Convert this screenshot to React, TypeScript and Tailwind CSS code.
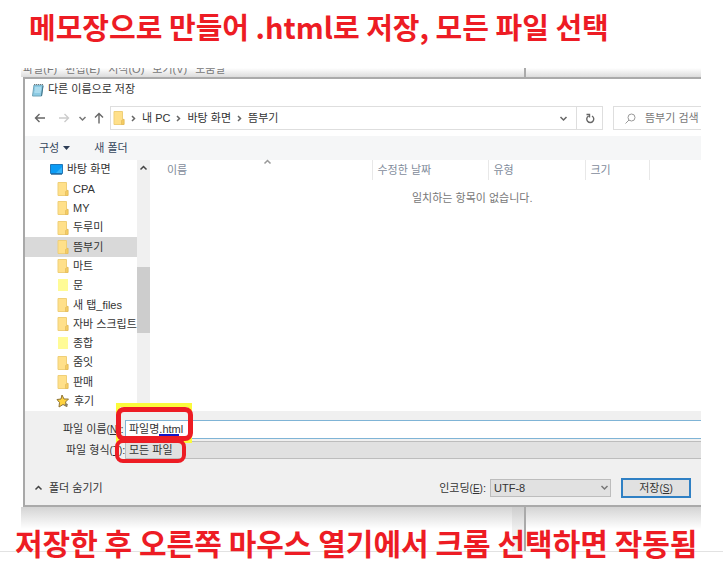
import type { ReactNode } from "react";

const MENU = ["파일(F)", "편집(E)", "서식(O)", "보기(V)", "도움말"];

type Kind = "desktop" | "folder" | "note" | "star";

const TREE: { name: string; kind: Kind; selected?: boolean }[] = [
  { name: "바탕 화면", kind: "desktop" },
  { name: "CPA", kind: "folder" },
  { name: "MY", kind: "folder" },
  { name: "두루미", kind: "folder" },
  { name: "뜸부기", kind: "folder", selected: true },
  { name: "마트", kind: "folder" },
  { name: "문", kind: "note" },
  { name: "새 탭_files", kind: "folder" },
  { name: "자바 스크립트", kind: "folder" },
  { name: "종합", kind: "note" },
  { name: "줌잇", kind: "folder" },
  { name: "판매", kind: "folder" },
  { name: "후기", kind: "star" },
];

function FolderIcon() {
  return (
    <svg width="12" height="14" viewBox="0 0 12 14" className="shrink-0">
      <path d="M1 .5h8.500v8H11v5H1z" fill="#ffe08a" stroke="#efcf78" />
      <path d="M8.500 13.500V9.500L11 8v5.500z" fill="#f5cd62" stroke="#dfb65a" strokeWidth=".6" />
    </svg>
  );
}

function TreeIcon({ kind }: { kind: Kind }) {
  if (kind === "folder") return <FolderIcon />;
  if (kind === "note")
    return (
      <svg width="12" height="14" viewBox="0 0 12 14" className="shrink-0">
        <path d="M1 1h10v12H1z" fill="#fffb96" />
      </svg>
    );
  if (kind === "desktop")
    return (
      <svg width="13" height="11" viewBox="0 0 13 11" className="shrink-0">
        <path d="M.5.5h12v9H.5z" fill="#0c9cf5" stroke="#2178b8" />
        <path d="M6 9l6-6v6z" fill="#35b3fa" />
        <path d="M1 10.200h11" stroke="#175d92" />
      </svg>
    );
  return (
    <svg width="14" height="14" viewBox="0 0 14 14" className="shrink-0">
      <path d="M6 1l2 4 4.500 0-3 3 1.500 4.500-4-2-4 2.500.5-4.500-2.500-3L5 5z" fill="#ffd23d" stroke="#8e7436" strokeLinejoin="round" />
      <path d="M9 9.500l3 .5-1 2.500-2.500-.5z" fill="#8a8069" />
    </svg>
  );
}

function Chevron({ dir, className = "" }: { dir: "up" | "down" | "right"; className?: string }) {
  const d = { up: "M1.500 5.500L4.500 2.500l3 3", down: "M1.500 3L4.500 6l3-3", right: "M3 2l2.500 2.500L3 7" }[dir];
  return (
    <svg width="9" height="9" viewBox="0 0 9 9" fill="none" stroke="currentColor" strokeWidth="1.500" className={`shrink-0 ${className}`}>
      <path d={d} />
    </svg>
  );
}

function Arrow({ className, d }: { className: string; d: string }) {
  return (
    <svg width="12" height="12" viewBox="0 0 12 12" fill="none" stroke="currentColor" strokeWidth="1.400" className={className}>
      <path d={d} />
    </svg>
  );
}

function Key({ children }: { children: ReactNode }) {
  return (
    <span className="text-[10px]">
      (<u>{children}</u>)
    </span>
  );
}

function AddressRow() {
  return (
    <div className="flex h-9 items-center">
      <div className="flex w-[85px] shrink-0 items-center pl-[9px]">
        <button aria-label="뒤로" className="text-[#666]">
          <Arrow className="block" d="M11 6H1.500M5.500 2l-4 4 4 4" />
        </button>
        <button aria-label="앞으로" className="ml-3 text-[#ccc]">
          <Arrow className="block" d="M1 6h9.500M6.500 2l4 4-4 4" />
        </button>
        <button aria-label="최근 위치" className="ml-2 text-[#777]">
          <Chevron dir="down" className="block" />
        </button>
        <button aria-label="위로" className="ml-1.5 text-[#666]">
          <Arrow className="block" d="M6 11.500V1.500M2 5.500l4-4 4 4" />
        </button>
      </div>
      <nav className="flex h-6 flex-1 items-center border border-[#dedede] pl-0.5">
        <FolderIcon />
        <Chevron dir="right" className="mx-1 text-[#666]" />
        <a href="#pc">내 PC</a>
        <Chevron dir="right" className="mx-1 text-[#666]" />
        <a href="#desktop">바탕 화면</a>
        <Chevron dir="right" className="mx-1 text-[#666]" />
        <a href="#folder">뜸부기</a>
        <button aria-label="이전 위치" className="mr-2 ml-auto text-[#666]">
          <Chevron dir="down" className="block" />
        </button>
        <button aria-label="새로 고침" className="flex h-full w-[26px] items-center justify-center border-l border-[#dedede] text-[#666]">
          <svg width="10" height="11" viewBox="0 0 10 11" fill="none" stroke="currentColor" strokeWidth="1.400">
            <path d="M7 3a3.500 3.500 0 1 1-3.500 0M1.500 1.500h3v3" />
          </svg>
        </button>
      </nav>
      <label className="ml-2.5 flex h-6 w-[88px] shrink-0 items-center border border-r-0 border-[#dedede] pl-[11px]">
        <svg width="11" height="11" viewBox="0 0 11 11" fill="none" stroke="#999" className="shrink-0">
          <circle cx="6.500" cy="4.500" r="3.500" />
          <path d="M4 7L.5 10.500" />
        </svg>
        <input aria-label="검색" placeholder="뜸부기 검색" className="ml-[9px] w-full min-w-0 bg-transparent outline-none placeholder:text-[#777]" />
      </label>
    </div>
  );
}

function Tree() {
  return (
    <ul className="grid w-[112px] shrink-0 grid-rows-13">
      {TREE.map((item) => (
        <li key={item.name} className={`flex ${item.selected ? "bg-[#d9d9d9]" : ""}`}>
          <button
            className={`flex w-full items-center gap-1 whitespace-nowrap ${
              item.kind === "desktop" ? "pl-[25px]" : item.kind === "star" ? "pl-[31px]" : "pl-8"
            }`}
          >
            <TreeIcon kind={item.kind} />
            {item.name}
          </button>
        </li>
      ))}
    </ul>
  );
}

function FileList() {
  return (
    <div className="relative min-w-0 flex-1">
      <Chevron dir="up" className="absolute -top-0.5 left-[113px] text-[#999]" />
      <table className="w-full table-fixed text-left">
        <thead className="text-[#7f8c9b]">
          <tr className="h-5">
            <th className="w-[222px] border-r border-[#e8e8e8] pl-[17px] font-normal">이름</th>
            <th className="w-[116px] border-r border-[#e8e8e8] pl-[5px] font-normal">수정한 날짜</th>
            <th className="w-[97px] border-r border-[#e8e8e8] pl-[5px] font-normal">유형</th>
            <th className="w-16 border-r border-[#e8e8e8] pl-[5px] font-normal">크기</th>
            <th />
          </tr>
        </thead>
        <tbody>
          <tr className="h-9 text-[#777]">
            <td colSpan={5} className="pl-[262px]">
              일치하는 항목이 없습니다.
            </td>
          </tr>
        </tbody>
      </table>
    </div>
  );
}

function SaveForm() {
  return (
    <form className="h-[94px] bg-[#f0f0f0] pt-[9px]">
      <div className="relative flex h-[19px]">
        <label htmlFor="name" className="flex w-[100px] shrink-0 items-center pl-[38px] whitespace-nowrap">
          파일 이름<Key>N</Key>:
        </label>
        <input id="name" defaultValue="파일명.html" className="min-w-0 flex-1 border border-r-0 border-[#7fb4d6] bg-white pl-[3px] outline-none" />
        <span className="absolute top-3.5 left-[134px] h-0.5 w-5 bg-[#1414c8]" />
        <span className="absolute -top-[17px] left-[91px] z-10 h-10 w-[76px] border-4 border-[#fbfb3c]" />
        <span className="absolute -top-[13px] left-[91px] z-20 h-[34px] w-[77px] rounded-lg border-5 border-[#ed1c24]" />
      </div>
      <div className="relative mt-0.5 flex h-[18px]">
        <label htmlFor="type" className="flex w-[100px] shrink-0 items-center pl-[41px] whitespace-nowrap">
          파일 형식<Key>T</Key>:
        </label>
        <select id="type" className="min-w-0 flex-1 appearance-none border border-r-0 border-[#bdbdbd] bg-[#e1e1e1] pl-[3px]">
          <option>모든 파일</option>
        </select>
        <span className="absolute -top-0.5 left-[90px] z-20 h-6 w-[71px] rounded-lg border-4 border-[#ed1c24]" />
      </div>
      <div className="mt-5 flex h-[18px] items-center pr-2.5">
        <button type="button" className="ml-[9px] flex items-center gap-1.5">
          <Chevron dir="up" className="text-[#444]" />
          폴더 숨기기
        </button>
        <label htmlFor="encoding" className="mr-1 ml-auto">
          인코딩<Key>E</Key>:
        </label>
        <div className="relative">
          <select id="encoding" className="block h-[18px] w-[121px] appearance-none border border-[#bdbdbd] bg-[#e1e1e1] pl-[3px]">
            <option>UTF-8</option>
          </select>
          <Chevron dir="down" className="pointer-events-none absolute top-1 right-0.5 text-[#777]" />
        </div>
        <button type="button" className="ml-2.5 h-5 w-[70px] border-2 border-[#2f80c4] bg-[#e1e1e1] leading-4">
          저장<Key>S</Key>
        </button>
      </div>
    </form>
  );
}

export default function App() {
  return (
    <main className="relative min-h-screen overflow-hidden bg-white font-['Noto_Sans_CJK_KR',sans-serif] text-[11px] text-[#333]">
      <h1 className="flex h-[68px] items-start pt-1.5 pl-[29px] text-[29px] leading-10 font-bold whitespace-nowrap text-[#ed1c24]">
        메모장으로 만들어 .html로 저장, 모든 파일 선택
      </h1>

      <div className="border-b border-[#e2e2e2] pr-[22px] pl-[21px] font-['Liberation_Sans','Noto_Sans_CJK_KR',sans-serif]">
        <div className="overflow-hidden">
          <div className="flex h-[9px] bg-linear-to-b from-white to-[#dcdcdc]">
            <div className="flex w-[505px] gap-2 overflow-hidden border-r-2 border-[#aaa] pl-0.5 leading-0.5 text-[#777]">
              {MENU.map((m) => (
                <span key={m}>{m}</span>
              ))}
            </div>
          </div>

          <section className="ml-0.5 border-2 border-r-0 border-t-[#aaa] border-b-[#aaa] border-l-[#a8a8a8] bg-white">
            <h2 className="flex h-[21px] items-center gap-1 pl-1.5">
              <svg width="13" height="14" viewBox="0 0 13 14">
                <path d="M3 2h9l-1.500 11h-9z" fill="#8ccbe4" stroke="#70a4b8" />
                <path d="M4 5h6M4 7h6M3.500 9h6" stroke="#c9ebf7" />
                <path d="M3 1.500h9.500" stroke="#777" strokeDasharray="1 1" />
                <path d="M10.500 13L12 3" stroke="#41768c" />
              </svg>
              다른 이름으로 저장
            </h2>
            <AddressRow />
            <div className="flex h-6 items-center bg-[#f5f6f7] pl-3.5 text-[#35465c]">
              <button className="flex items-center gap-1">
                구성
                <svg width="7" height="4" viewBox="0 0 7 4">
                  <path d="M0 0h7L3.500 4z" fill="#2d3d55" />
                </svg>
              </button>
              <button className="ml-6">새 폴더</button>
            </div>
            <div className="flex h-[251px]">
              <Tree />
              <div className="flex w-[13px] shrink-0 flex-col items-center bg-[#f0f0f0] pt-1">
                <Chevron dir="up" className="text-[#444]" />
                <div className="mt-[94px] h-[66px] w-full bg-[#cdcdcd]" />
                <Chevron dir="down" className="mt-auto text-[#444]" />
              </div>
              <FileList />
            </div>
            <SaveForm />
          </section>

          <div className="flex h-11">
            <div className="w-[491px] bg-linear-to-b from-[#d4d4d4] to-white to-50%" />
            <div className="w-3.5 border-r-2 border-[#aaa] bg-linear-to-b from-[#cdcdcd] to-[#f0f0f0] to-50%" />
            <div className="flex-1 bg-linear-to-b from-[#d4d4d4] to-white to-50%" />
          </div>
        </div>
      </div>

      <p className="absolute top-[522px] left-[15px] text-[30px] leading-10 font-bold whitespace-nowrap text-[#ed1c24]">
        저장한 후 오른쪽 마우스 열기에서 크롬 선택하면 작동됨
      </p>
    </main>
  );
}
